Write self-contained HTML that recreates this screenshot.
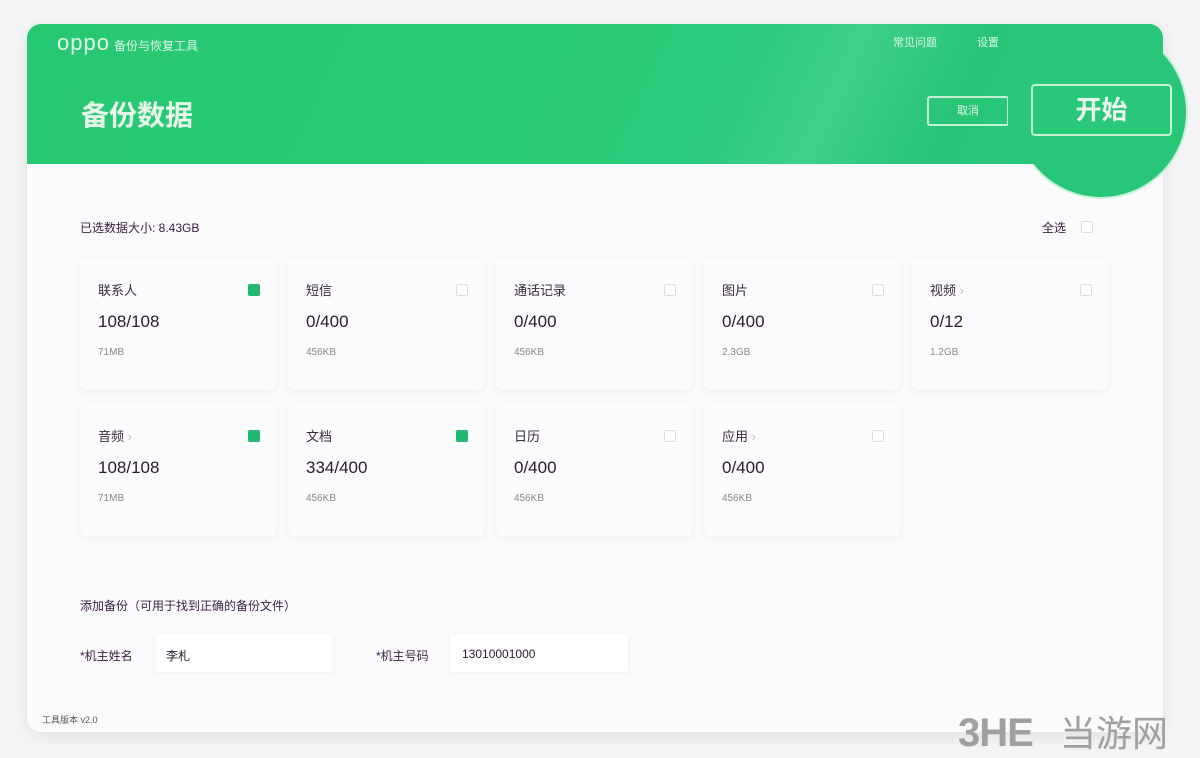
<!DOCTYPE html>
<html><head><meta charset="utf-8"><style>
body{margin:0;width:1200px;height:758px;background:#f3f4f6;font-family:"Liberation Sans","Noto Sans CJK SC",sans-serif;position:relative;overflow:hidden}
.card{position:absolute;left:27px;top:24px;width:1136px;height:708px;background:#fbfbfd;border-radius:14px;box-shadow:0 4px 16px rgba(0,0,0,.08);overflow:hidden}
.hdr{position:absolute;left:0;top:0;width:1136px;height:140px;background:linear-gradient(115deg,#27c873 0%,#2acb7a 60%,#3ed088 70%,#27c575 80%,#29c878 100%)}
.circ{position:absolute;left:1016px;top:27px;width:170px;height:170px;border-radius:50%;background:#28c777;box-shadow:0 0 0 2px #c9f2d9}
.patch{position:absolute;left:1008px;top:24px;width:155px;height:140px;background:#29c878;border-top-right-radius:14px}
.t{position:absolute;white-space:nowrap}
.box{position:absolute;width:196px;height:132px;background:#fcfcfe;border-radius:6px;box-shadow:0 2px 8px rgba(0,0,0,.05)}
.box .n{position:absolute;left:18px;top:22px;font-size:13px;color:#3a2a3a}
.box .c{position:absolute;left:18px;top:54px;font-size:17px;color:#2a1a30}
.box .s{position:absolute;left:18px;top:89px;font-size:10px;color:#888}
.cb{position:absolute;right:16px;top:26px;width:10px;height:10px;border:1px solid #ddd;border-radius:2px;background:#fff}
.cb.on{background:#22b873;border-color:#22b873}
.inp{position:absolute;height:38px;background:#fff;box-shadow:0 1px 4px rgba(0,0,0,.05)}
</style></head><body>
<div class="card">
<div class="hdr"></div>
<div class="t" style="left:30px;top:6px;font-size:22px;color:#dff6e6;letter-spacing:1px">oppo<span style="font-size:12px;margin-left:4px;letter-spacing:0">备份与恢复工具</span></div>
<div class="t" style="left:866px;top:10px;font-size:11px;color:#dff6e6">常见问题</div>
<div class="t" style="left:950px;top:10px;font-size:11px;color:#dff6e6">设置</div>
<div class="t" style="left:54px;top:70px;font-size:28px;color:#e6f7ea;font-weight:bold">备份数据</div>
<div style="position:absolute;left:900px;top:72px;width:82px;height:30px;border:2px solid #c8f0d6;border-radius:3px;box-sizing:border-box;color:#e6f7ea;font-size:11px;text-align:center;line-height:26px">取消</div>
</div>
<div class="circ"></div>
<div class="patch"></div>
<div style="position:absolute;left:1031px;top:84px;width:141px;height:52px;border:2px solid #c8f0d6;border-radius:4px;box-sizing:border-box;color:#eaf8ee;font-size:26px;font-weight:bold;text-align:center;line-height:48px">开始</div>
<div class="t" style="left:80px;top:219px;font-size:12px;color:#3a2040">已选数据大小: 8.43GB</div>
<div class="t" style="left:1042px;top:219px;font-size:12px;color:#3a2040">全选</div>
<div style="position:absolute;left:1081px;top:221px;width:10px;height:10px;border:1px solid #ddd;border-radius:2px;background:#fff"></div>

<div class="box" style="left:80px;top:258px"><div class="n">联系人</div><div class="cb on"></div><div class="c">108/108</div><div class="s">71MB</div></div>
<div class="box" style="left:288px;top:258px"><div class="n">短信</div><div class="cb"></div><div class="c">0/400</div><div class="s">456KB</div></div>
<div class="box" style="left:496px;top:258px"><div class="n">通话记录</div><div class="cb"></div><div class="c">0/400</div><div class="s">456KB</div></div>
<div class="box" style="left:704px;top:258px"><div class="n">图片</div><div class="cb"></div><div class="c">0/400</div><div class="s">2.3GB</div></div>
<div class="box" style="left:912px;top:258px"><div class="n">视频 <span style="color:#bbb">›</span></div><div class="cb"></div><div class="c">0/12</div><div class="s">1.2GB</div></div>
<div class="box" style="left:80px;top:404px"><div class="n">音频 <span style="color:#bbb">›</span></div><div class="cb on"></div><div class="c">108/108</div><div class="s">71MB</div></div>
<div class="box" style="left:288px;top:404px"><div class="n">文档</div><div class="cb on"></div><div class="c">334/400</div><div class="s">456KB</div></div>
<div class="box" style="left:496px;top:404px"><div class="n">日历</div><div class="cb"></div><div class="c">0/400</div><div class="s">456KB</div></div>
<div class="box" style="left:704px;top:404px"><div class="n">应用 <span style="color:#bbb">›</span></div><div class="cb"></div><div class="c">0/400</div><div class="s">456KB</div></div>

<div class="t" style="left:80px;top:597px;font-size:12px;color:#3a2040">添加备份（可用于找到正确的备份文件）</div>
<div class="inp" style="left:155px;top:634px;width:178px"></div>
<div class="inp" style="left:450px;top:634px;width:178px"></div>
<div class="t" style="left:80px;top:647px;font-size:12px;color:#3a2040">*机主姓名</div>
<div class="t" style="left:166px;top:647px;font-size:12px;color:#2a1a30">李札</div>
<div class="t" style="left:376px;top:647px;font-size:12px;color:#3a2040">*机主号码</div>
<div class="t" style="left:462px;top:647px;font-size:12px;color:#2a1a30">13010001000</div>
<div class="t" style="left:42px;top:713px;font-size:9px;color:#555">工具版本 v2.0</div>
<div class="t" style="left:958px;top:708px;font-size:40px;color:#a0a0a0;font-weight:bold;letter-spacing:-1px;line-height:50px">3HE</div>
<div class="t" style="left:1060px;top:712px;font-size:36px;color:#a0a0a0;line-height:44px">当游网</div>
</body></html>
